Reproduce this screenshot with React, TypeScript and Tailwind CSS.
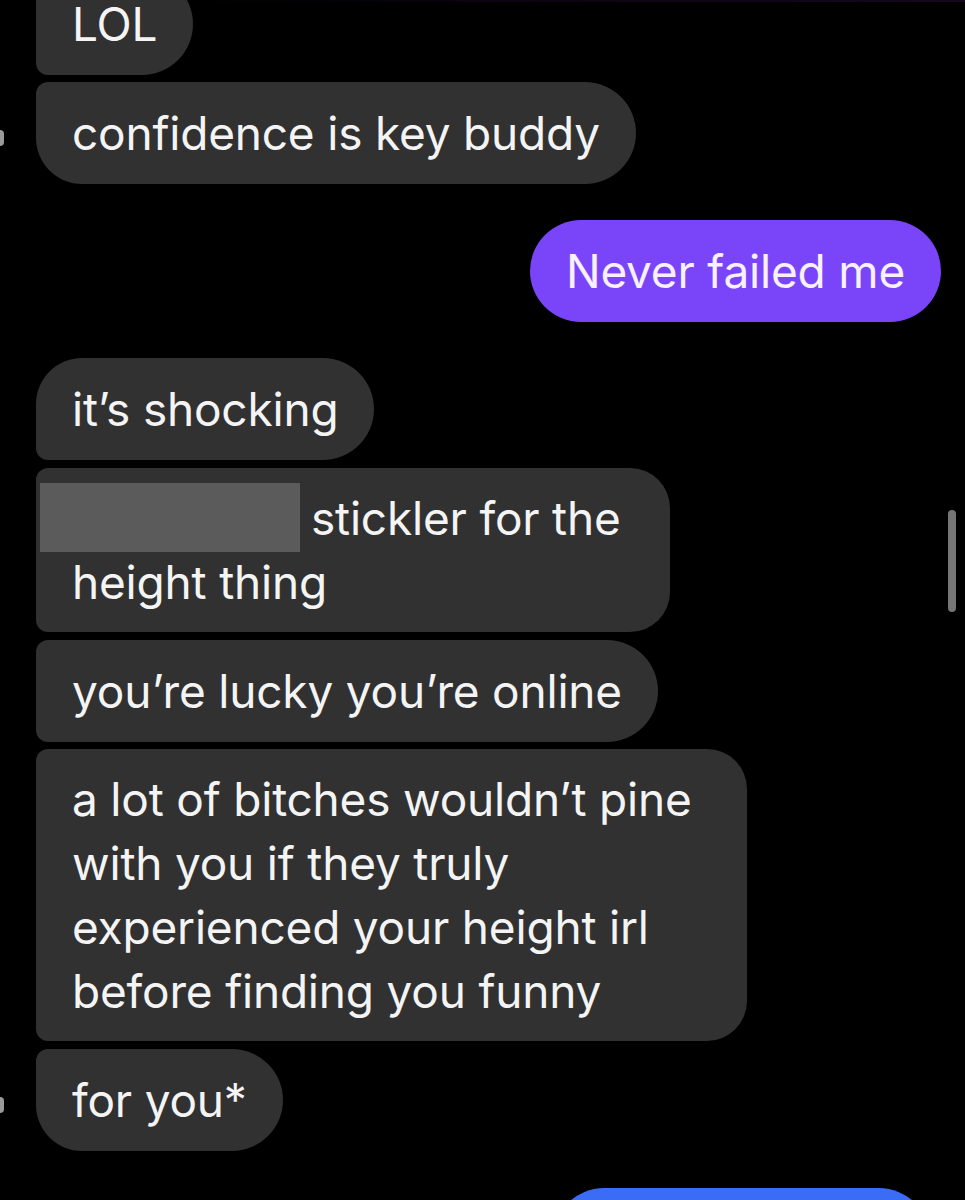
type Corner = 'first' | 'middle' | 'last' | 'single'

const leftRadius: Record<Corner, string> = {
  first: 'rounded-tl-[46px] rounded-bl-[12px]',
  middle: 'rounded-tl-[12px] rounded-bl-[12px]',
  last: 'rounded-tl-[12px] rounded-bl-[46px]',
  single: 'rounded-l-[51px]',
}

function Incoming({
  children,
  pos,
  multi = false,
  avatar = false,
  className = '',
}: {
  children: React.ReactNode
  pos: Corner
  multi?: boolean
  avatar?: boolean
  className?: string
}) {
  return (
    <div className="flex items-center">
      <div className="w-[36px] shrink-0 flex items-center pt-[10px]">
        {avatar && <div className="w-[4px] h-[16px] rounded-r-full bg-[#9a9a9a]" />}
      </div>
      <div
        className={`bg-[#313131] text-[#f4f4f4] px-[36px] ${
          multi ? 'py-[18px] rounded-r-[40px]' : 'py-[19px] rounded-r-[51px]'
        } ${leftRadius[pos]} ${className}`}
      >
        {children}
      </div>
    </div>
  )
}

export default function App() {
  return (
    <div
      className="relative w-[965px] h-[1200px] overflow-hidden bg-black text-[46px] leading-[64px] tracking-[-0.2px]"
      style={{ fontFamily: 'Inter, "Noto Sans", sans-serif' }}
    >
      <div className="h-[2px] bg-gradient-to-r from-black via-[#0c0412] to-[#14071e]" />
      <div className="flex flex-col -mt-[29px]">
        <Incoming pos="middle">LOL</Incoming>
        <div className="h-[7px]" />
        <Incoming pos="last" avatar>
          confidence is key buddy
        </Incoming>

        <div className="h-[36px]" />
        <div className="flex justify-end pr-[24px]">
          <div className="bg-[#7a45f8] text-[#f7f0ff] px-[36px] py-[19px] rounded-full">
            Never failed me
          </div>
        </div>

        <div className="h-[36px]" />
        <Incoming pos="first">it’s shocking</Incoming>
        <div className="h-[8px]" />
        <Incoming pos="middle" multi className="w-[634px]">
          <span className="inline-block align-top w-[260px] h-[69px] -my-[3px] -ml-[32px] mr-[11px] bg-[#5b5b5b]" />
          stickler for the
          <br />
          height thing
        </Incoming>
        <div className="h-[8px]" />
        <Incoming pos="middle">you’re lucky you’re online</Incoming>
        <div className="h-[7px]" />
        <Incoming pos="middle" multi className="w-[711px]">
          a lot of bitches wouldn’t pine
          <br />
          with you if they truly
          <br />
          experienced your height irl
          <br />
          before finding you funny
        </Incoming>
        <div className="h-[8px]" />
        <Incoming pos="last" avatar>
          for you*
        </Incoming>

        <div className="h-[37px]" />
        <div className="flex justify-end pr-[35px]">
          <div className="w-[377px] h-[102px] bg-[#3a6cf6] rounded-t-[51px]" />
        </div>
      </div>

      {/* scroll indicator */}
      <div className="absolute left-[948px] top-[510px] w-[8px] h-[102px] rounded-full bg-[#767676]" />
    </div>
  )
}
